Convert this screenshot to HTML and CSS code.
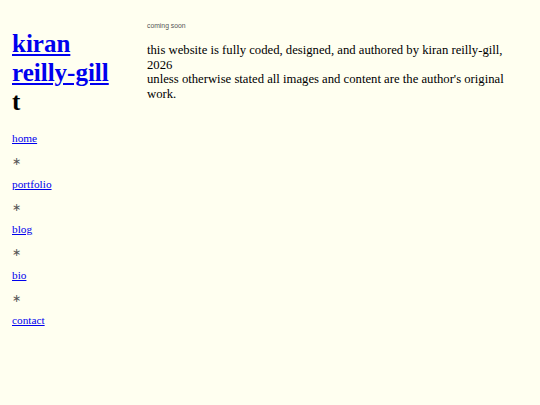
FILE: index.html
```html
<!DOCTYPE html>
<html>
<head>
<meta charset="utf-8">
<link rel="stylesheet" href="styles.css">
</head>
<body>
<div class="page">
  <aside class="side">
    <h1 class="title"><a href="#">kiran reilly-gill</a> t</h1>
    <nav class="nav">
      <a href="#">home</a>
      <span class="star">∗</span>
      <a href="#">portfolio</a>
      <span class="star">∗</span>
      <a href="#">blog</a>
      <span class="star">∗</span>
      <a href="#">bio</a>
      <span class="star">∗</span>
      <a href="#">contact</a>
    </nav>
  </aside>
  <main class="main">
    <p class="soon">coming soon</p>
    <p class="text">this website is fully coded, designed, and authored by kiran reilly-gill, 2026<br>unless otherwise stated all images and content are the author's original work.</p>
  </main>
</div>
</body>
</html>
```
FILE: styles.css
```css
html, body {
  margin: 0;
  padding: 0;
  background: #fffff0;
}
body {
  font-family: "Liberation Serif", serif;
  color: #000;
}
.page {
  display: flex;
  padding-left: 12px;
}
.side {
  width: 110px;
  flex: none;
}
.title {
  margin: 30px 0 0;
  font-size: 25px;
  font-weight: bold;
  line-height: 28.75px;
}
.title a {
  color: #0000ee;
}
.nav {
  display: flex;
  flex-direction: column;
  align-items: flex-start;
  margin-top: 16px;
  font-size: 11.3px;
  line-height: 12.75px;
}
.nav a {
  color: #0000ee;
}
.star {
  color: #555;
  font-size: 10.5px;
  line-height: 18.75px;
  margin: 8px 0 6px;
}
.main {
  margin-left: 25px;
  flex: 1;
  padding-right: 30px;
}
.soon {
  margin: 22px 0 0;
  font-family: "Liberation Sans", sans-serif;
  font-size: 6.8px;
  color: #555;
}
.text {
  margin: 14px 0 0;
  font-size: 12.7px;
  line-height: 14.5px;
}
```
